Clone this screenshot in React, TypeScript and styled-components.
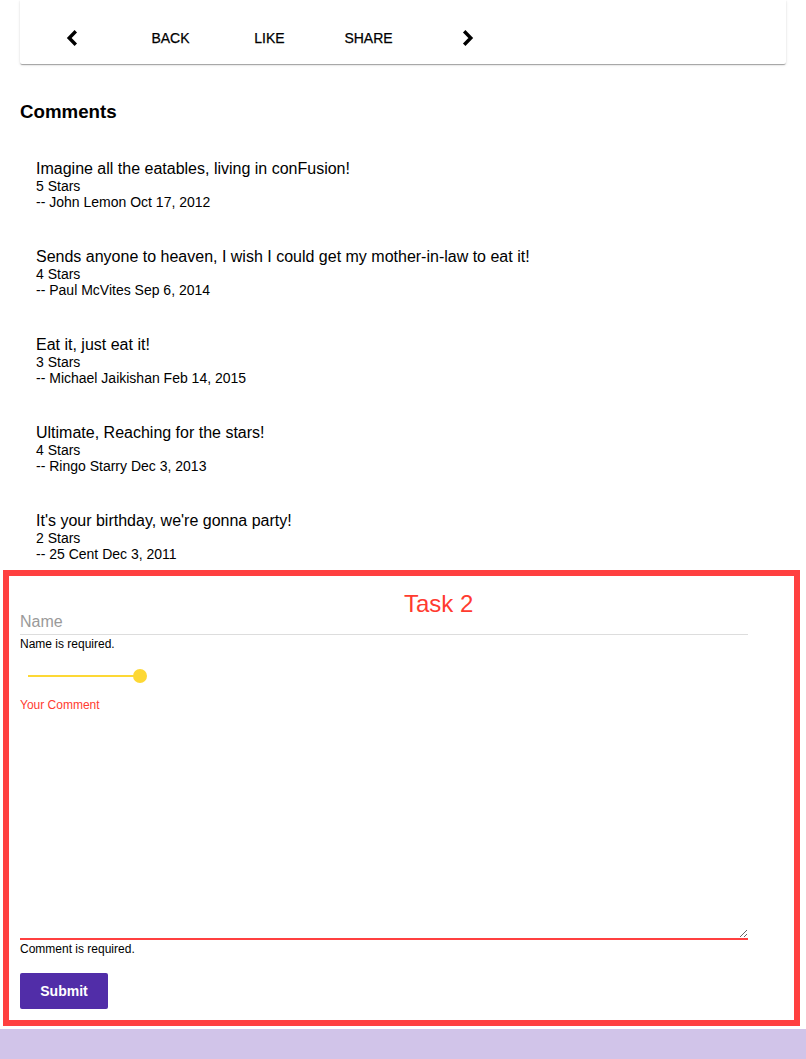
import React from "react";
import styled, { createGlobalStyle } from "styled-components";

const GlobalStyle = createGlobalStyle`
  html, body {
    margin: 0;
    padding: 0;
    background: #ffffff;
    font-family: "Liberation Sans", Arial, Helvetica, sans-serif;
    color: #000;
  }
  * { box-sizing: border-box; }
`;

const Page = styled.div`
  padding: 0 20px;
`;

const Card = styled.div`
  background: #fff;
  height: 64px;
  padding-top: 18px;
  border-radius: 0 0 2px 2px;
  box-shadow: 0 2px 1px -1px rgba(0, 0, 0, 0.2), 0 1px 1px 0 rgba(0, 0, 0, 0.14),
    0 1px 3px 0 rgba(0, 0, 0, 0.12);
`;

const Actions = styled.div`
  display: flex;
  align-items: center;
  padding-left: 2px;
  height: 40px;
`;

const ActionButton = styled.button`
  width: 99px;
  height: 40px;
  display: flex;
  align-items: center;
  justify-content: center;
  background: none;
  border: none;
  padding: 0;
  font-family: "Liberation Sans", Arial, sans-serif;
  font-size: 14px;
  font-weight: 500;
  text-transform: uppercase;
  color: #000;
  -webkit-text-stroke: 0.25px #000;
  cursor: pointer;
`;

const Heading = styled.h3`
  margin: 37px 0 0;
  font-size: 18.72px;
  line-height: 22px;
  font-weight: 700;
`;

const CommentList = styled.ul`
  list-style: none;
  margin: 37px 0 0;
  padding: 0 0 0 16px;
  display: flex;
  flex-direction: column;
  gap: 38px;
`;

const CommentItem = styled.li`
  display: flex;
  flex-direction: column;
`;

const CommentText = styled.span`
  font-size: 16px;
  line-height: 18px;
`;

const CommentMeta = styled.span`
  font-size: 14px;
  line-height: 16px;
`;

const FormSection = styled.form`
  position: relative;
  padding: 48px 0 20px;
`;

const Annotation = styled.div`
  position: absolute;
  top: 8px;
  left: -17px;
  right: -14px;
  bottom: 3px;
  border: 6px solid #ff4040;
  pointer-events: none;
`;

const AnnotationLabel = styled.span`
  position: absolute;
  top: 14px;
  left: 395px;
  font-size: 24px;
  line-height: 28px;
  color: #ff3b30;
`;

const FieldGroup = styled.div`
  width: 728px;
  display: flex;
  flex-direction: column;
`;

const TextInput = styled.input`
  width: 100%;
  border: none;
  border-bottom: 1px solid #dddddd;
  outline: none;
  padding: 2px 0;
  font-family: "Liberation Sans", Arial, sans-serif;
  font-size: 16px;
  line-height: 20px;
  height: 25px;
  background: transparent;
  &::placeholder {
    color: #9a9a9a;
  }
`;

const Hint = styled.span<{ $gap?: number }>`
  font-size: 12px;
  line-height: 14px;
  margin-top: ${(p) => p.$gap ?? 2}px;
  color: #000;
`;

const SliderWrap = styled.div`
  position: relative;
  width: 128px;
  height: 30px;
  margin-top: 10px;
  padding: 0 8px;
  display: flex;
  align-items: center;
`;

const SliderTrack = styled.div`
  flex: 1;
  height: 2px;
  background: #fdd835;
`;

const SliderThumb = styled.div`
  position: absolute;
  right: 1px;
  top: 50%;
  width: 14px;
  height: 14px;
  margin-top: -7px;
  border-radius: 50%;
  background: #fdd835;
`;

const FieldLabel = styled.label`
  font-size: 12px;
  line-height: 14px;
  margin-top: 7px;
  color: #ff3b30;
`;

const CommentArea = styled.textarea`
  width: 100%;
  height: 226px;
  margin-top: 2px;
  border: none;
  border-bottom: 2px solid #ff4040;
  outline: none;
  resize: vertical;
  font-family: "Liberation Sans", Arial, sans-serif;
  font-size: 16px;
  padding: 0;
  display: block;
`;

const SubmitButton = styled.button`
  margin-top: 17px;
  width: 88px;
  height: 36px;
  border: none;
  border-radius: 2px;
  background: #512da8;
  color: #fff;
  font-family: "Liberation Sans", Arial, sans-serif;
  font-size: 14px;
  font-weight: 700;
  cursor: pointer;
`;

const Footer = styled.footer`
  background: #d1c4e9;
  height: 120px;
`;

const Chevron = ({ dir }: { dir: "left" | "right" }) => (
  <svg width="12" height="18" viewBox="0 0 12 18" aria-hidden="true">
    <path
      d={dir === "left" ? "M9.8 2.2 L3.2 9 L9.8 15.8" : "M2.2 2.2 L8.8 9 L2.2 15.8"}
      fill="none"
      stroke="#000"
      strokeWidth="3.4"
      strokeLinejoin="miter"
      strokeLinecap="butt"
    />
  </svg>
);

const comments = [
  { text: "Imagine all the eatables, living in conFusion!", stars: 5, author: "John Lemon", date: "Oct 17, 2012" },
  { text: "Sends anyone to heaven, I wish I could get my mother-in-law to eat it!", stars: 4, author: "Paul McVites", date: "Sep 6, 2014" },
  { text: "Eat it, just eat it!", stars: 3, author: "Michael Jaikishan", date: "Feb 14, 2015" },
  { text: "Ultimate, Reaching for the stars!", stars: 4, author: "Ringo Starry", date: "Dec 3, 2013" },
  { text: "It's your birthday, we're gonna party!", stars: 2, author: "25 Cent", date: "Dec 3, 2011" },
];

export default function App() {
  return (
    <>
      <GlobalStyle />
      <Page>
        <Card>
          <Actions>
            <ActionButton type="button" aria-label="Previous">
              <Chevron dir="left" />
            </ActionButton>
            <ActionButton type="button">Back</ActionButton>
            <ActionButton type="button">Like</ActionButton>
            <ActionButton type="button">Share</ActionButton>
            <ActionButton type="button" aria-label="Next">
              <Chevron dir="right" />
            </ActionButton>
          </Actions>
        </Card>

        <Heading>Comments</Heading>
        <CommentList>
          {comments.map((c) => (
            <CommentItem key={c.author}>
              <CommentText>{c.text}</CommentText>
              <CommentMeta>{c.stars} Stars</CommentMeta>
              <CommentMeta>
                -- {c.author} {c.date}
              </CommentMeta>
            </CommentItem>
          ))}
        </CommentList>

        <FormSection onSubmit={(e) => e.preventDefault()}>
          <FieldGroup>
            <TextInput placeholder="Name" />
            <Hint>Name is required.</Hint>
            <SliderWrap>
              <SliderTrack />
              <SliderThumb />
            </SliderWrap>
            <FieldLabel>Your Comment</FieldLabel>
            <CommentArea />
            <Hint>Comment is required.</Hint>
          </FieldGroup>
          <SubmitButton type="submit">Submit</SubmitButton>
          <Annotation>
            <AnnotationLabel>Task 2</AnnotationLabel>
          </Annotation>
        </FormSection>
      </Page>
      <Footer />
    </>
  );
}
